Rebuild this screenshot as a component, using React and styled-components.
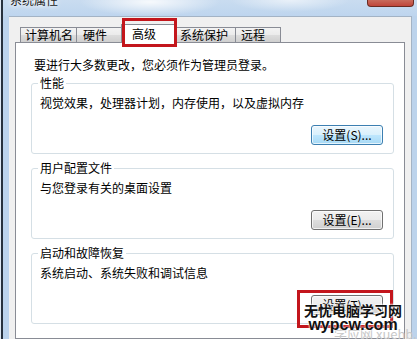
import React from "react";
import styled, { createGlobalStyle } from "styled-components";

const Global = createGlobalStyle`
  html, body { margin: 0; padding: 0; background: #fff; }
  body { font-family: "Noto Sans CJK SC", "Noto Sans", sans-serif; }
`;

const FONT = `"Noto Sans CJK SC", "Liberation Sans", sans-serif`;

const Window = styled.div`
  position: relative;
  width: 417px;
  height: 339px;
  overflow: hidden;
  display: flex;
  flex-direction: column;
  background: #bcd3ec;
  box-shadow: inset 1px 0 0 #dfe8f3, inset 3px 0 0 #27313d;
  font-family: ${FONT};
  font-size: 12px;
  color: #000;
`;

const TitleBar = styled.div`
  height: 16px;
  flex: none;
  display: flex;
  justify-content: space-between;
  align-items: flex-start;
  padding-left: 10px;
  background:
    radial-gradient(ellipse 70px 14px at 150px 2px, rgba(255,255,255,0.85), rgba(255,255,255,0) 100%),
    radial-gradient(ellipse 60px 12px at 290px 0px, rgba(255,255,255,0.6), rgba(255,255,255,0) 100%),
    linear-gradient(180deg, #c9dcf0 0%, #bed5ee 100%);
  box-shadow: inset 1px 0 0 #dfe8f3, inset 3px 0 0 #27313d;
`;

const Title = styled.span`
  font-size: 12px;
  line-height: 14px;
  margin-top: -7px;
  color: #1a1a1a;
  text-shadow: 0 0 4px #fff, 0 0 6px #fff;
`;

const CloseButton = styled.div`
  width: 45px;
  height: 6px;
  margin-right: 3px;
  border: 1px solid #6b2b22;
  border-top: none;
  border-radius: 0 0 4px 4px;
  background: linear-gradient(180deg, #c86b5c 0%, #c0463a 100%);
`;

const Frame = styled.div`
  flex: 1;
  display: flex;
  padding: 0 5px 0 9px;
  min-height: 0;
`;

const Body = styled.div`
  flex: 1;
  display: flex;
  flex-direction: column;
  background: #f0f0f0;
  border-top: 1px solid #a3b3c5;
  border-right: 1px solid #a3b3c5;
  padding: 0 6px 0 6px;
  min-height: 0;
`;

const TabRow = styled.div`
  display: flex;
  align-items: flex-end;
  padding: 7px 0 0 5px;
  margin-bottom: -1px;
  position: relative;
  z-index: 1;
`;

const Tab = styled.div`
  box-sizing: border-box;
  width: ${(p) => p.$w}px;
  padding-left: ${(p) => p.$pad}px;
  margin-left: ${(p) => (p.$first ? 0 : -1)}px;
  height: 16px;
  line-height: 14px;
  border: 1px solid #898c95;
  background: linear-gradient(180deg, #f3f3f3 0%, #ebebeb 50%, #dddddd 51%, #cfcfcf 100%);
  white-space: nowrap;
  color: #000;
  position: relative;

  ${(p) =>
    p.$active &&
    `
    height: 19px;
    padding-top: 2px;
    margin-left: -3px;
    margin-right: -2px;
    border-bottom: none;
    background: #fff;
    z-index: 2;
  `}
`;

const Panel = styled.div`
  flex: 1;
  background: #fff;
  border: 1px solid #898c95;
  padding: 14px 10px 0 15px;
  display: flex;
  flex-direction: column;
`;

const Intro = styled.div`
  line-height: 16px;
  padding-left: 3px;
  margin-bottom: 3px;
`;

const Group = styled.fieldset`
  margin: ${(p) => (p.$first ? 0 : 7)}px 0 0 0;
  padding: 0 10px 8px 8px;
  border: 1px solid #d5dfe5;
  border-radius: 3px;
  min-width: 0;
`;

const Legend = styled.legend`
  padding: 0 2px;
  margin-left: -2px;
  line-height: 14px;
  font-size: 12px;
`;

const Desc = styled.div`
  line-height: 16px;
  margin-top: 5px;
`;

const ButtonRow = styled.div`
  display: flex;
  justify-content: flex-end;
  margin-top: 14px;
`;

const Button = styled.button`
  box-sizing: border-box;
  width: 72px;
  height: 20px;
  padding: 0;
  font-family: ${FONT};
  font-size: 12px;
  line-height: 16px;
  color: #000;
  border-radius: 3px;
  border: 1px solid ${(p) => (p.$focused ? "#3c7fb1" : "#707070")};
  background: ${(p) =>
    p.$focused
      ? "linear-gradient(180deg, #eaf6fd 0%, #d9f0fc 50%, #bee6fd 51%, #a7d9f5 100%)"
      : "linear-gradient(180deg, #f2f2f2 0%, #ebebeb 50%, #dddddd 51%, #cfcfcf 100%)"};
  box-shadow: inset 0 0 0 1px rgba(255, 255, 255, 0.7);
`;

const Highlight = styled.div`
  position: absolute;
  left: ${(p) => p.$x}px;
  top: ${(p) => p.$y}px;
  width: ${(p) => p.$w}px;
  height: ${(p) => p.$h}px;
  box-sizing: border-box;
  border: 3px solid #c3161c;
  z-index: 5;
`;

const Watermark = styled.div`
  position: absolute;
  left: 304px;
  top: 302px;
  z-index: 6;
  display: flex;
  flex-direction: column;
  align-items: center;
  line-height: 1;
`;

const WmTitle = styled.div`
  font-family: "Noto Sans CJK SC", sans-serif;
  font-weight: 700;
  font-size: 14px;
  line-height: 16px;
  color: #111;
  text-shadow: 0 0 2px #fff, 0 0 2px #fff, 0 0 3px #fff;
`;

const WmUrl = styled.div`
  font-family: "Liberation Sans", Arial, sans-serif;
  font-weight: 700;
  font-size: 16px;
  line-height: 14px;
  color: #111;
  text-shadow: 0 0 2px #fff, 0 0 2px #fff;
`;

const WmFaint = styled.div`
  position: absolute;
  left: 334px;
  top: 327px;
  z-index: 4;
  font-family: "Noto Sans CJK SC", "Liberation Sans", sans-serif;
  font-size: 13px;
  line-height: 14px;
  color: #c8c8c8;
  white-space: nowrap;
`;

const tabs = [
  { label: "计算机名", w: 57, pad: 4 },
  { label: "硬件", w: 48, pad: 6 },
  { label: "高级", w: 56, pad: 10, active: true },
  { label: "系统保护", w: 62, pad: 5 },
  { label: "远程", w: 46, pad: 5 },
];

const groups = [
  { title: "性能", desc: "视觉效果，处理器计划，内存使用，以及虚拟内存", btn: "设置(S)...", focused: true },
  { title: "用户配置文件", desc: "与您登录有关的桌面设置", btn: "设置(E)..." },
  { title: "启动和故障恢复", desc: "系统启动、系统失败和调试信息", btn: "设置(T)..." },
];

export default function App() {
  return (
    <>
      <Global />
      <Window>
        <TitleBar>
          <Title>系统属性</Title>
          <CloseButton />
        </TitleBar>
        <Frame>
          <Body>
            <TabRow>
              {tabs.map((t, i) => (
                <Tab key={t.label} $w={t.w} $pad={t.pad} $active={t.active} $first={i === 0}>
                  {t.label}
                </Tab>
              ))}
            </TabRow>
            <Panel>
              <Intro>要进行大多数更改，您必须作为管理员登录。</Intro>
              {groups.map((g, i) => (
                <Group key={g.title} $first={i === 0}>
                  <Legend>{g.title}</Legend>
                  <Desc>{g.desc}</Desc>
                  <ButtonRow>
                    <Button $focused={g.focused}>{g.btn}</Button>
                  </ButtonRow>
                </Group>
              ))}
            </Panel>
          </Body>
        </Frame>
        <Highlight $x={122} $y={18} $w={55} $h={29} />
        <Highlight $x={297} $y={290} $w={96} $h={38} />
        <WmFaint>学应网 xuehb.com</WmFaint>
        <Watermark>
          <WmTitle>无忧电脑学习网</WmTitle>
          <WmUrl>wypcw.com</WmUrl>
        </Watermark>
      </Window>
    </>
  );
}
